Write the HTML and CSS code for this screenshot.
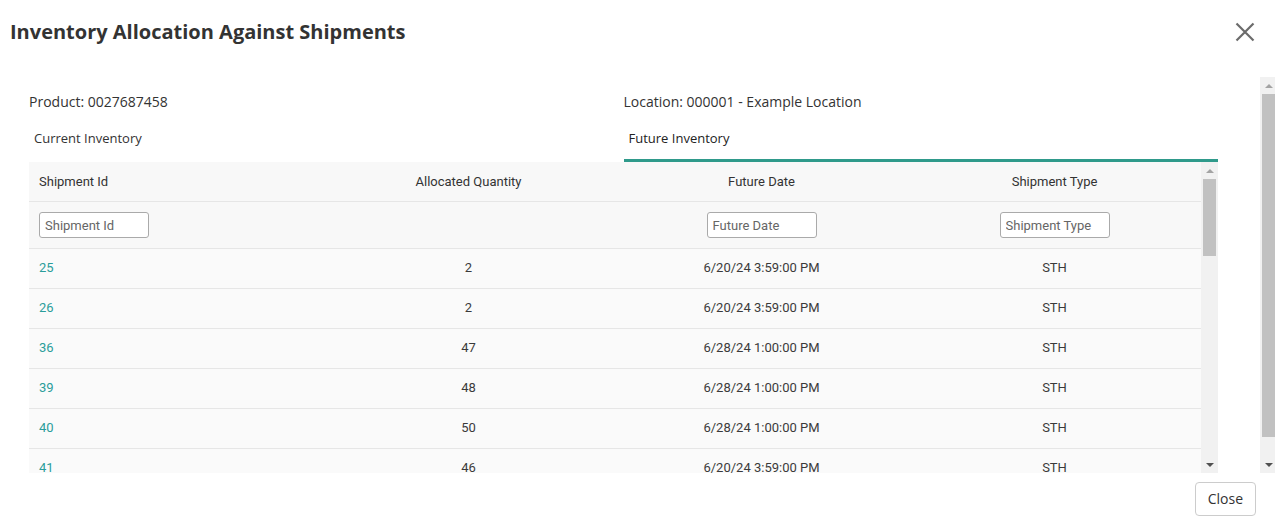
FILE: index.html
```html
<!DOCTYPE html>
<html lang="en">
<head>
<meta charset="utf-8">
<title>Inventory Allocation Against Shipments</title>
<link rel="stylesheet" href="styles.css">
</head>
<body>
<div class="modal">
  <header class="modal-header">
    <h1 class="modal-title">Inventory Allocation Against Shipments</h1>
    <button class="icon-close" aria-label="Close">
      <svg width="20" height="20" viewBox="0 0 20 20"><path d="M1.5 1.5 L18.5 18.5 M18.5 1.5 L1.5 18.5" stroke="#6b6b6b" stroke-width="2.2" fill="none"/></svg>
    </button>
  </header>
  <div class="modal-body">
    <div class="body-content">
      <div class="info-row">
        <div class="info">Product: 0027687458</div>
        <div class="info">Location: 000001 - Example Location</div>
      </div>
      <div class="tabs">
        <div class="tab">Current Inventory</div>
        <div class="tab active">Future Inventory</div>
      </div>
      <div class="grid-wrap">
        <div class="grid-view">
          <table class="grid">
            <thead>
              <tr class="head-row">
                <th class="left">Shipment Id</th>
                <th>Allocated Quantity</th>
                <th>Future Date</th>
                <th>Shipment Type</th>
              </tr>
              <tr class="filter-row">
                <th class="left"><input class="filter" placeholder="Shipment Id"></th>
                <th></th>
                <th><input class="filter" placeholder="Future Date"></th>
                <th><input class="filter" placeholder="Shipment Type"></th>
              </tr>
            </thead>
            <tbody>
              <tr><td class="left"><a href="#">25</a></td><td>2</td><td>6/20/24 3:59:00 PM</td><td>STH</td></tr>
              <tr><td class="left"><a href="#">26</a></td><td>2</td><td>6/20/24 3:59:00 PM</td><td>STH</td></tr>
              <tr><td class="left"><a href="#">36</a></td><td>47</td><td>6/28/24 1:00:00 PM</td><td>STH</td></tr>
              <tr><td class="left"><a href="#">39</a></td><td>48</td><td>6/28/24 1:00:00 PM</td><td>STH</td></tr>
              <tr><td class="left"><a href="#">40</a></td><td>50</td><td>6/28/24 1:00:00 PM</td><td>STH</td></tr>
              <tr><td class="left"><a href="#">41</a></td><td>46</td><td>6/20/24 3:59:00 PM</td><td>STH</td></tr>
              <tr><td class="left"><a href="#">42</a></td><td>12</td><td>6/20/24 3:59:00 PM</td><td>STH</td></tr>
            </tbody>
          </table>
        </div>
        <div class="vscroll inner">
          <div class="sb-btn"><span class="arrow up"></span></div>
          <div class="sb-track"><div class="sb-thumb"></div></div>
          <div class="sb-btn"><span class="arrow down"></span></div>
        </div>
      </div>
    </div>
    <div class="vscroll outer">
      <div class="sb-btn"><span class="arrow up"></span></div>
      <div class="sb-track"><div class="sb-thumb"></div></div>
      <div class="sb-btn"><span class="arrow down"></span></div>
    </div>
  </div>
  <footer class="modal-footer">
    <button class="btn">Close</button>
  </footer>
</div>
</body>
</html>
```
FILE: styles.css
```css
* { box-sizing: border-box; }
html, body { margin: 0; padding: 0; background: #fff; }
body {
  font-family: "Open Sans", "Liberation Sans", sans-serif;
  color: #333;
  width: 1275px;
  height: 520px;
  overflow: hidden;
}
.modal {
  display: flex;
  flex-direction: column;
  height: 520px;
}
.modal-header {
  height: 77px;
  display: flex;
  align-items: flex-start;
  justify-content: space-between;
  padding: 17px 20px 0 10px;
}
.modal-title {
  margin: 0;
  font-size: 20px;
  line-height: 30px;
  font-weight: 700;
  color: #333;
}
.icon-close {
  border: 0;
  background: none;
  padding: 0;
  margin-top: 5px;
  width: 20px;
  height: 20px;
  display: flex;
}
.modal-body {
  height: 396px;
  display: flex;
}
.body-content {
  flex: 1;
  display: flex;
  flex-direction: column;
  padding: 15px 42px 0 29px;
  overflow: hidden;
}
.info-row {
  display: grid;
  grid-template-columns: 1fr 1fr;
  font-size: 14px;
  line-height: 20px;
  height: 20px;
}
.tabs {
  display: grid;
  grid-template-columns: 1fr 1fr;
  height: 50px;
}
.tab {
  font-size: 13px;
  line-height: 18px;
  padding: 17px 5px 12px;
  border-bottom: 3px solid transparent;
  color: #333;
}
.tab.active {
  border-bottom-color: #2f9a8b;
  color: #222;
}
.grid-wrap {
  flex: 1;
  display: flex;
  overflow: hidden;
  background: #f9f9f9;
}
.grid-view {
  flex: 1;
  overflow: hidden;
}
.grid {
  width: 100%;
  table-layout: fixed;
  border-collapse: separate;
  border-spacing: 0;
  font-family: Roboto, "Liberation Sans", sans-serif;
  font-size: 13px;
  color: #3a3a3a;
}
.grid th, .grid td {
  text-align: center;
  font-weight: 400;
  padding: 0 10px;
  border-bottom: 1px solid #e6e6e6;
}
.grid .left { text-align: left; }
.head-row th { height: 40px; background: #f8f8f8; color: #333; }
.filter-row th { height: 47px; background: #f8f8f8; }
.grid td { height: 40px; padding-bottom: 2px; background: #fafafa; }
.grid a { color: #2a9d9a; text-decoration: none; }
.filter {
  width: 110px;
  height: 26px;
  border: 1px solid #aaa;
  border-radius: 3px;
  padding: 0 5px;
  font-family: Roboto, "Liberation Sans", sans-serif;
  font-size: 13px;
  color: #333;
  background: #fff;
  vertical-align: middle;
}
.filter::placeholder { color: #666; }
.vscroll {
  display: flex;
  flex-direction: column;
  background: #f1f1f1;
}
.vscroll.inner { width: 17px; }
.vscroll.outer { width: 15px; }
.sb-btn {
  height: 17px;
  display: flex;
  align-items: center;
  justify-content: center;
}
.vscroll.outer .sb-btn { padding-left: 2px; }
.sb-track { flex: 1; }
.sb-thumb { background: #c1c1c1; }
.vscroll.inner .sb-thumb { height: 77px; margin: 0 2px; }
.vscroll.outer .sb-thumb { height: 343px; margin-left: 2px; }
.arrow {
  width: 0;
  height: 0;
  border-left: 4px solid transparent;
  border-right: 4px solid transparent;
}
.arrow.up { border-bottom: 4px solid #a3a3a3; }
.arrow.down { border-top: 4px solid #505050; }
.modal-footer {
  flex: 1;
  display: flex;
  justify-content: flex-end;
  align-items: flex-start;
  padding: 9px 19px 0 0;
}
.btn {
  font-family: "Open Sans", "Liberation Sans", sans-serif;
  font-size: 14px;
  line-height: 20px;
  padding: 6px 12px;
  border: 1px solid #ccc;
  border-radius: 4px;
  background: #fff;
  color: #333;
}
```
